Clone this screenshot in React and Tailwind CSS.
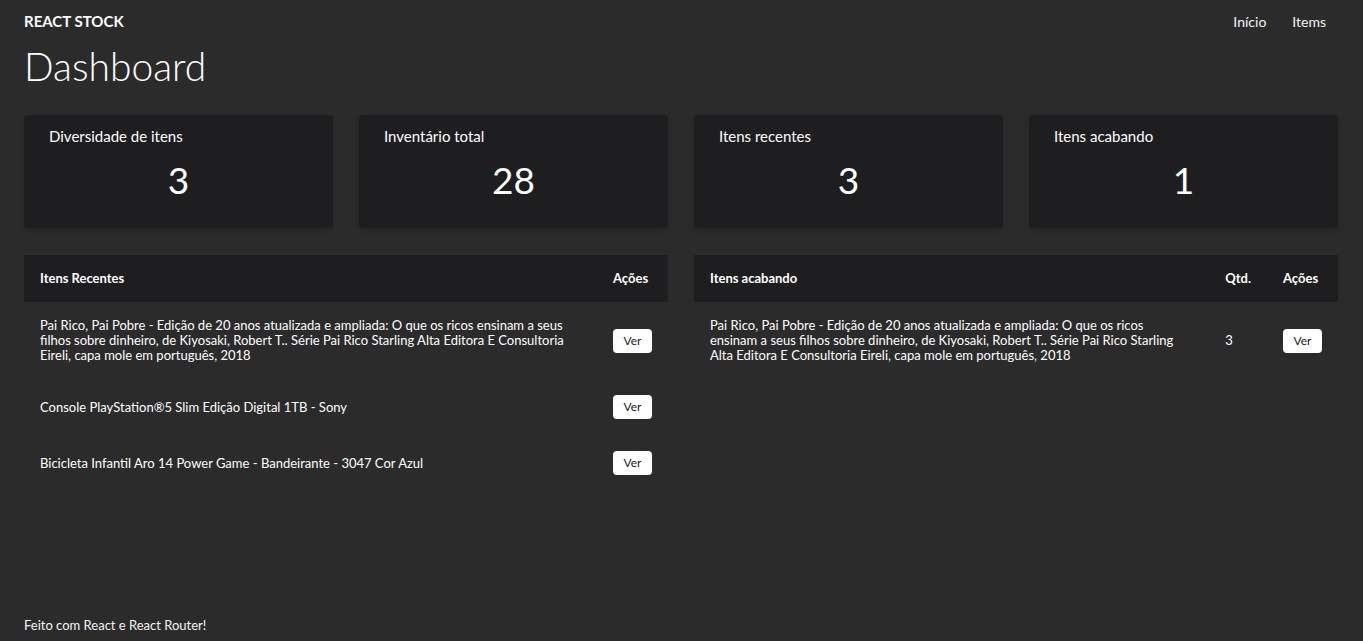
const recentes = [
  "Pai Rico, Pai Pobre - Edição de 20 anos atualizada e ampliada: O que os ricos ensinam a seus filhos sobre dinheiro, de Kiyosaki, Robert T.. Série Pai Rico Starling Alta Editora E Consultoria Eireli, capa mole em português, 2018",
  "Console PlayStation®5 Slim Edição Digital 1TB - Sony",
  "Bicicleta Infantil Aro 14 Power Game - Bandeirante - 3047 Cor Azul",
];

const acabando = [
  {
    name: "Pai Rico, Pai Pobre - Edição de 20 anos atualizada e ampliada: O que os ricos ensinam a seus filhos sobre dinheiro, de Kiyosaki, Robert T.. Série Pai Rico Starling Alta Editora E Consultoria Eireli, capa mole em português, 2018",
    qtd: 3,
  },
];

const stats = [
  { title: "Diversidade de itens", value: 3 },
  { title: "Inventário total", value: 28 },
  { title: "Itens recentes", value: 3 },
  { title: "Itens acabando", value: 1 },
];

function VerButton() {
  return (
    <button className="h-6 w-[39px] rounded-sm bg-white text-[12px] text-[#1e1d20]">
      Ver
    </button>
  );
}

export default function App() {
  return (
    <div
      className="min-h-screen bg-[#2b2b2b] text-white flex flex-col pl-6 pr-[25px]"
      style={{ fontFamily: "Lato, 'Noto Sans', sans-serif" }}
    >
      {/* Header */}
      <header className="flex items-center justify-between h-[42px]">
        <span className="font-bold text-[15px]">REACT STOCK</span>
        <nav className="flex gap-[26px] text-[14px] mr-3 text-gray-100">
          <a href="#" className="ml-[2px]">Início</a>
          <a href="#">Items</a>
        </nav>
      </header>

      <h1 className="text-[39px] font-light leading-[48px]">Dashboard</h1>

      {/* Cards */}
      <div className="grid grid-cols-4 gap-[26px] mt-[25px]">
        {stats.map((s) => (
          <div
            key={s.title}
            className="h-[113px] rounded bg-[#1e1d20] shadow-md px-[25px] pt-[12px]"
          >
            <p className="text-[15px] leading-[18px]">{s.title}</p>
            <p className="text-center text-[37px] leading-[44px] mt-[13px]">{s.value}</p>
          </div>
        ))}
      </div>

      {/* Tables */}
      <div className="grid grid-cols-2 gap-[26px] mt-[27px] items-start">
        <table className="w-full border-collapse text-[13px]">
          <thead>
            <tr className="bg-[#1e1d20] h-[47px]">
              <th className="text-left px-4 font-bold">Itens Recentes</th>
              <th className="text-left px-4 font-bold w-[71px]">Ações</th>
            </tr>
          </thead>
          <tbody>
            {recentes.map((r) => (
              <tr key={r}>
                <td className="px-4 py-4 leading-[15px]">{r}</td>
                <td className="px-4 py-4">
                  <VerButton />
                </td>
              </tr>
            ))}
          </tbody>
        </table>

        <table className="w-full border-collapse text-[13px]">
          <thead>
            <tr className="bg-[#1e1d20] h-[47px]">
              <th className="text-left px-4 font-bold">Itens acabando</th>
              <th className="text-left px-4 font-bold w-[56px]">Qtd.</th>
              <th className="text-left px-4 font-bold w-[70px]">Ações</th>
            </tr>
          </thead>
          <tbody>
            {acabando.map((r) => (
              <tr key={r.name}>
                <td className="px-4 py-4 leading-[15px]">{r.name}</td>
                <td className="px-4 py-4">{r.qtd}</td>
                <td className="px-4 py-4">
                  <VerButton />
                </td>
              </tr>
            ))}
          </tbody>
        </table>
      </div>

      <footer className="mt-auto pb-[6px] text-[13px] text-gray-100">
        Feito com React e React Router!
      </footer>
    </div>
  );
}
